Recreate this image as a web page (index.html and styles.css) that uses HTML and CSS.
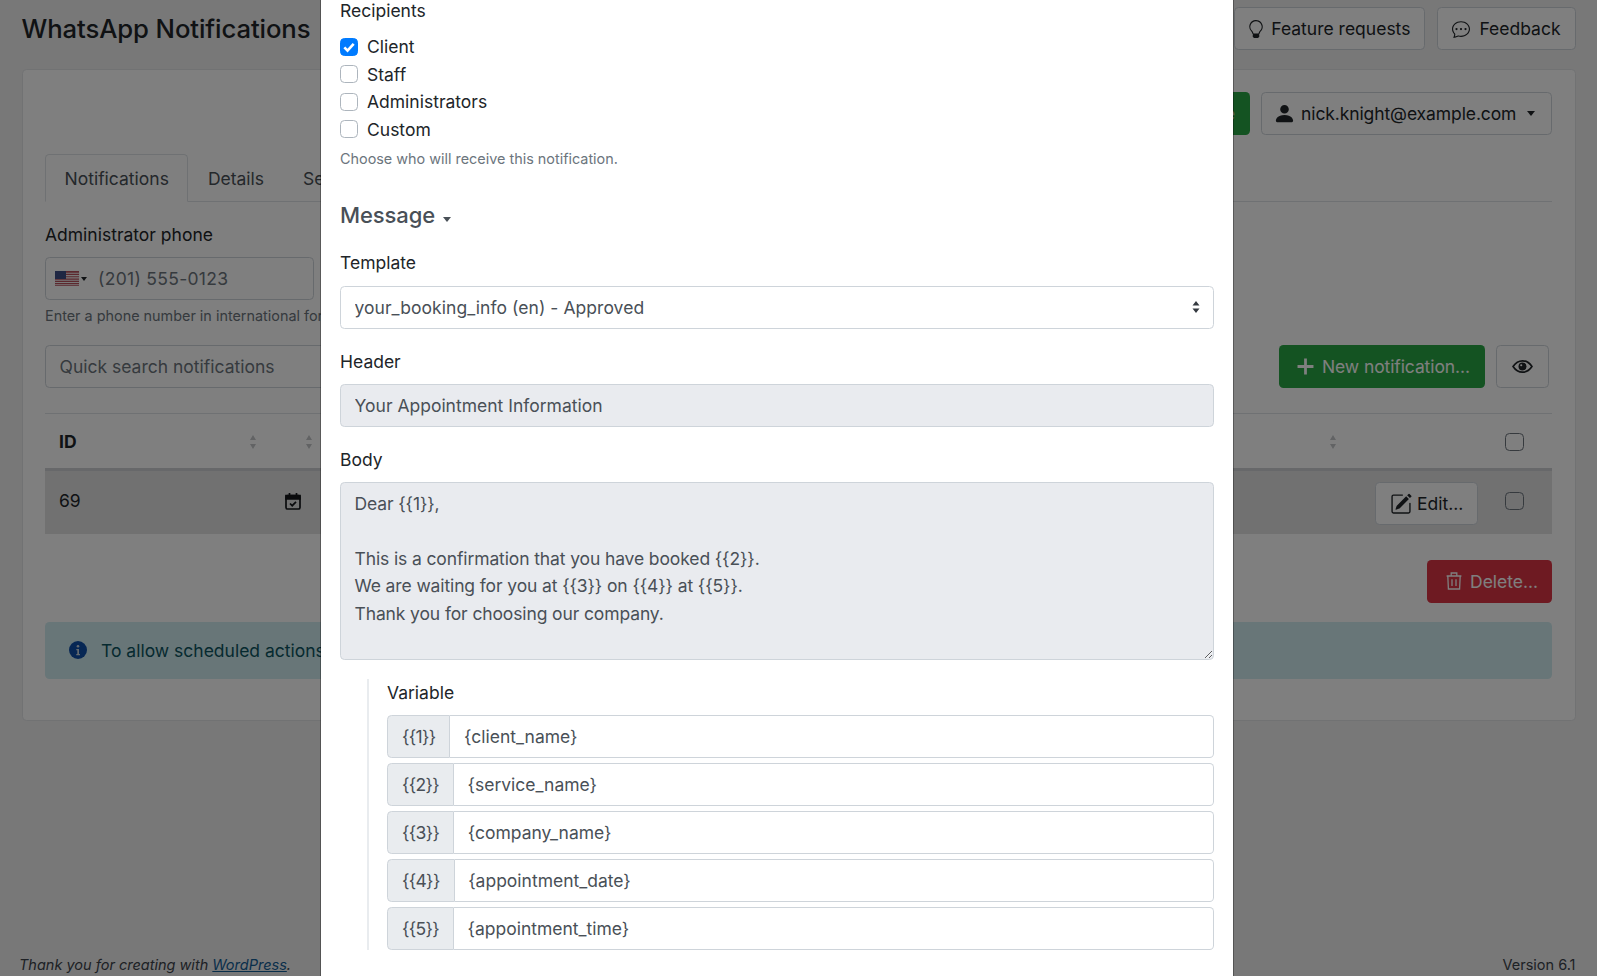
FILE: index.html
```html
<!DOCTYPE html>
<html lang="en">
<head>
<meta charset="utf-8">
<title>WhatsApp Notifications</title>
<link rel="stylesheet" href="styles.css">
</head>
<body>
<div class="page">
  <header class="top">
    <h1 class="title">WhatsApp Notifications</h1>
    <div class="top-actions">
      <a class="btn btn-light"><svg class="ico ico-bulb" viewBox="0 0 16 16"><path d="M2 6a6 6 0 1 1 10.174 4.31c-.203.196-.359.4-.453.619l-.762 1.769A.5.5 0 0 1 10.5 13a.5.5 0 0 1 0 1 .5.5 0 0 1 0 1l-.224.447a1 1 0 0 1-.894.553H6.618a1 1 0 0 1-.894-.553L5.5 15a.5.5 0 0 1 0-1 .5.5 0 0 1 0-1 .5.5 0 0 1-.46-.302l-.761-1.77a1.964 1.964 0 0 0-.453-.618A5.984 5.984 0 0 1 2 6zm6-5a5 5 0 0 0-3.479 8.592c.263.254.514.564.676.941L5.83 12h4.342l.632-1.467c.162-.377.413-.687.676-.941A5 5 0 0 0 8 1z"/></svg>Feature requests</a>
      <a class="btn btn-light"><svg class="ico" viewBox="0 0 16 16"><path d="M5 8a1 1 0 1 1-2 0 1 1 0 0 1 2 0zm4 0a1 1 0 1 1-2 0 1 1 0 0 1 2 0zm3 1a1 1 0 1 0 0-2 1 1 0 0 0 0 2z"/><path d="m2.165 15.803.02-.004c1.83-.363 2.948-.842 3.468-1.105A9.06 9.06 0 0 0 8 15c4.418 0 8-3.134 8-7s-3.582-7-8-7-8 3.134-8 7c0 1.76.743 3.37 1.97 4.6a10.437 10.437 0 0 1-.524 2.318l-.003.011a10.722 10.722 0 0 1-.244.637c-.079.186.074.394.273.362a21.673 21.673 0 0 0 .693-.125zm.8-3.108a1 1 0 0 0-.287-.801C1.618 10.83 1 9.468 1 8c0-3.192 3.004-6 7-6s7 2.808 7 6c0 3.193-3.004 6-7 6a8.06 8.06 0 0 1-2.088-.272 1 1 0 0 0-.711.074c-.387.196-1.24.57-2.634.893a10.97 10.97 0 0 0 .398-2z"/></svg>Feedback</a>
    </div>
  </header>

  <main class="card">
    <div class="account-row">
      <a class="btn btn-green btn-upgrade">Upgrade</a>
      <a class="btn btn-light btn-account"><svg class="ico ico-person" viewBox="0 0 16 16"><path d="M3 14s-1 0-1-1 1-4 6-4 6 3 6 4-1 1-1 1H3zm5-6a3 3 0 1 0 0-6 3 3 0 0 0 0 6z"/></svg><span class="account-name">nick.knight@example.com</span><span class="caret"></span></a>
    </div>

    <nav class="tabs">
      <a class="tab tab-active">Notifications</a>
      <a class="tab">Details</a>
      <a class="tab">Settings</a>
    </nav>

    <label class="label">Administrator phone</label>
    <div class="phone">
      <svg class="flag" viewBox="0 0 24 15"><rect width="24" height="15" fill="#b8505c"/><path d="M0 2.3h24M0 4.6h24M0 6.9h24M0 9.2h24M0 11.5h24M0 13.8h24" stroke="#f3f3f3" stroke-width="1.1"/><rect width="11" height="8" fill="#3f4f86"/></svg>
      <span class="caret caret-small"></span>
      <span class="phone-text">(201) 555-0123</span>
    </div>
    <p class="help help-phone">Enter a phone number in international format.</p>

    <div class="search-row">
      <input class="input input-search" placeholder="Quick search notifications">
      <a class="btn btn-green btn-new"><svg class="ico ico-plus" viewBox="0 0 16 16"><path d="M8 0.500v15M0.500 8h15"/></svg>New notification...</a>
      <a class="btn btn-light btn-eye"><svg class="ico ico-eye" viewBox="0 0 20 14"><path class="eye-line" d="M1 7c2.4-3.6 5.4-5.4 9-5.4s6.600 1.800 9 5.400c-2.400 3.600-5.400 5.400-9 5.400S3.400 10.600 1 7z"/><circle cx="10" cy="7" r="3.800"/><circle cx="8.800" cy="5.800" r="1" fill="#fff"/></svg></a>
    </div>

    <div class="table">
      <div class="tr tr-head">
        <div class="td td-id"><b>ID</b><svg class="sort" viewBox="0 0 8 16"><path d="M4 1l3 5H1zM4 15l3-5H1z"/></svg></div>
        <div class="td td-icon"><svg class="sort" viewBox="0 0 8 16"><path d="M4 1l3 5H1zM4 15l3-5H1z"/></svg></div>
        <div class="td td-name"><svg class="sort" viewBox="0 0 8 16"><path d="M4 1l3 5H1zM4 15l3-5H1z"/></svg></div>
        <div class="td td-action"></div>
        <div class="td td-check"><span class="check check-dark"></span></div>
      </div>
      <div class="tr tr-row">
        <div class="td td-id td-up">69</div>
        <div class="td td-icon td-cal td-up"><svg class="ico-cal" viewBox="0 0 16 18"><rect x="1" y="3.500" width="14" height="13.500" rx="1.500"/><path class="cal-band" d="M1 3.500h14v3.300H1z"/><path d="M4.500 1v3M11.500 1v3"/><path d="M5 11.500l2.200 2.200L11 9.800"/></svg></div>
        <div class="td td-name"></div>
        <div class="td td-action td-down"><a class="btn btn-light btn-edit"><svg class="ico" viewBox="0 0 16 16"><path d="M15.502 1.940a.5.5 0 0 1 0 .706L14.459 3.690l-2-2L13.502.646a.5.5 0 0 1 .707 0l1.293 1.293zm-1.750 2.456-2-2L4.939 9.210a.5.5 0 0 0-.121.196l-.805 2.414a.25.25 0 0 0 .316.316l2.414-.805a.5.5 0 0 0 .196-.12l6.813-6.814z"/><path d="M1 13.500A1.500 1.500 0 0 0 2.500 15h11a1.500 1.500 0 0 0 1.500-1.500v-6a.5.5 0 0 0-1 0v6a.5.5 0 0 1-.5.5h-11a.5.5 0 0 1-.5-.5v-11a.5.5 0 0 1 .5-.5H9a.5.5 0 0 0 0-1H2.500A1.500 1.500 0 0 0 1 2.500v11z"/></svg>Edit...</a></div>
        <div class="td td-check td-up"><span class="check check-dark"></span></div>
      </div>
    </div>

    <div class="delete-row">
      <a class="btn btn-red"><svg class="ico ico-trash" viewBox="0 0 16 18"><path d="M0.600 4h14.800M1.800 4l.6 13h11.200l.6-13M5.200 4V1h5.600v3M6 7.200v6.800M10 7.200v6.800"/></svg>Delete...</a>
    </div>

    <div class="alert">
      <svg class="ico-info" viewBox="0 0 18 18"><circle cx="9" cy="9" r="9" fill="#0f4fa8"/><circle cx="9" cy="5.300" r="1.300" fill="#c8d4df"/><path d="M7.300 8h2.700v5h1v1.200H7.300V13h1V9.200h-1z" fill="#c8d4df"/></svg>
      <span>To allow scheduled actions to run, please configure a cron job on your server.</span>
    </div>
  </main>

  <footer class="foot">
    <em>Thank you for creating with <a class="foot-link">WordPress</a>.</em>
    <span>Version 6.1</span>
  </footer>
</div>

<div class="backdrop"></div>

<section class="modal">
  <label class="label label-first">Recipients</label>
  <div class="checks">
    <div class="check-row"><span class="check check-on"><svg viewBox="0 0 12 12"><path d="M2.500 6.300l2.400 2.400 4.600-5"/></svg></span>Client</div>
    <div class="check-row"><span class="check"></span>Staff</div>
    <div class="check-row"><span class="check"></span>Administrators</div>
    <div class="check-row"><span class="check"></span>Custom</div>
  </div>
  <p class="help help-rec">Choose who will receive this notification.</p>

  <h2 class="section">Message<span class="caret caret-section"></span></h2>

  <div class="group">
    <label class="label">Template</label>
    <div class="select-wrap">
      <select class="input select"><option>your_booking_info (en) - Approved</option></select>
      <svg class="select-arrows" viewBox="0 0 8 12"><path d="M4 0l3.500 4.500H.5zM4 12L.5 7.500h7z"/></svg>
    </div>
  </div>
  <div class="group">
    <label class="label">Header</label>
    <input class="input input-off" value="Your Appointment Information" readonly>
  </div>
  <div class="group">
    <label class="label label-body">Body</label>
    <textarea class="input input-off textarea" readonly>Dear {{1}},

This is a confirmation that you have booked {{2}}.
We are waiting for you at {{3}} on {{4}} at {{5}}.
Thank you for choosing our company.</textarea>
  </div>

  <div class="vars">
    <label class="label">Variable</label>
    <div class="var-group"><span class="addon">{{1}}</span><input class="input var-input" value="{client_name}"></div>
    <div class="var-group"><span class="addon">{{2}}</span><input class="input var-input" value="{service_name}"></div>
    <div class="var-group"><span class="addon">{{3}}</span><input class="input var-input" value="{company_name}"></div>
    <div class="var-group"><span class="addon">{{4}}</span><input class="input var-input" value="{appointment_date}"></div>
    <div class="var-group"><span class="addon">{{5}}</span><input class="input var-input" value="{appointment_time}"></div>
  </div>
</section>
</body>
</html>
```

FILE: styles.css
```css
* { box-sizing: border-box; }
html, body { margin: 0; height: 976px; overflow: hidden; }
body {
  background: #f0f0f1;
  color: #212529;
  font-family: Inter, "Liberation Sans", sans-serif;
  font-size: 17.5px;
  line-height: 27px;
}
.page {
  height: 976px;
  padding: 7px 21.500px 0 22px;
  display: flex;
  flex-direction: column;
}
.top { display: flex; justify-content: space-between; align-items: center; margin-bottom: 19px; }
.title { margin: 0 0 0 -.500px; font-size: 25.700px; line-height: 43px; font-weight: 500; letter-spacing: -.1px; position: relative; top: 0; }
.top-actions { display: flex; gap: 12px; }

.btn {
  display: inline-flex;
  align-items: center;
  height: 43px;
  padding: 0 14px;
  border: 1px solid transparent;
  border-radius: 4.500px;
  white-space: nowrap;
}
.btn-light { background: #fff; border-color: #ced4da; color: #212529; }
.btn-green { background: #28a745; color: #fff; }
.btn-red { background: #dc3545; color: #fff; }
.ico { width: 18px; height: 18px; margin-right: 9px; fill: currentColor; flex: none; }
.ico-bulb { margin-left: -2px; margin-right: 6px; }

.card {
  background: #fff;
  border: 1px solid #e2e4e7;
  border-radius: 4.500px;
  padding: 22px 22.500px 41px 22px;
}
.account-row { display: flex; justify-content: flex-end; gap: 11px; }
.btn-account { background: #fff; width: 291px; padding-left: 14px; }
.ico-person { width: 23px; height: 23px; margin: 0 5px 0 -3px; }
.account-name { letter-spacing: -.1px; }
.caret {
  display: inline-block;
  width: 0;
  height: 0;
  border-left: 4.500px solid transparent;
  border-right: 4.500px solid transparent;
  border-top: 5px solid currentColor;
  margin-left: 11px;
}

.tabs { display: flex; margin-top: 19px; border-bottom: 1px solid #dee2e6; height: 48px; }
.tab {
  padding: 10px 18.500px 0;
  border: 1px solid transparent;
  border-radius: 4.500px 4.500px 0 0;
  height: 48px;
  color: #495057;
}
.tab-active { background: #fff; border-color: #dee2e6 #dee2e6 #fff; }

.label { display: block; }
.tabs + .label { margin-top: 19px; }
.phone {
  margin-top: 9px;
  width: 269px;
  height: 43px;
  border: 1px solid #ced4da;
  border-radius: 4.500px;
  display: flex;
  align-items: center;
  padding-left: 9px;
  background: #fff;
  color: #6c757d;
}
.flag { width: 24px; height: 15px; flex: none; }
.caret-small { border-width: 4px 3.500px 0; margin-left: 2px; color: #212529; }
.phone-text { margin-left: 11px; letter-spacing: .3px; }
.help { margin: 0; font-size: 14.400px; line-height: 21.600px; color: #6c757d; }
.help-phone { margin-top: 5px; white-space: nowrap; }

.search-row { display: flex; margin-top: 18px; align-items: center; }
.input {
  height: 43px;
  border: 1px solid #ced4da;
  border-radius: 4.500px;
  background: #fff;
  color: #495057;
  font: inherit;
  padding: 0 13.500px;
  width: 100%;
  display: block;
  outline: none;
}
.input::placeholder { color: #6c757d; opacity: 1; }
.input-search { width: 500px; }
.btn-new { margin-left: auto; width: 206px; padding-left: 17px; letter-spacing: -.1px; }
.ico-plus { fill: none; stroke: currentColor; stroke-width: 2.600px; margin-right: 8px; width: 17px; height: 17px; }
.btn-eye { margin-left: 11px; margin-right: 3px; width: 53px; justify-content: center; padding: 0; }
.ico-eye { width: 21px; height: 15px; margin: 0; }
.eye-line { fill: none; stroke: currentColor; stroke-width: 1.600px; }

.table { margin-top: 25px; border-top: 1px solid #dee2e6; }
.tr { display: grid; grid-template-columns: 217px 56px 1fr 148px 62px; align-items: center; }
.tr-head { height: 57px; padding-top: 2px; border-bottom: 3px solid #ced1d4; }
.tr-row { height: 63px; background: #e2e2e3; }
.td { padding-left: 14px; }
.td-id { display: flex; justify-content: space-between; align-items: center; padding-right: 5px; }
.td-icon { display: flex; justify-content: flex-end; padding-right: 5px; }
.td-cal { padding-right: 17px; }
.td-name { display: flex; justify-content: flex-end; padding-right: 5px; }
.td-action { display: flex; justify-content: flex-end; padding-right: 12px; }
.td-check { padding-left: 15px; display: flex; }
.td-up { position: relative; top: -1.500px; }
.td-down { position: relative; top: 1.500px; }
.sort { width: 8px; height: 16px; fill: #c4c6c9; }
.ico-cal { width: 16px; height: 18px; fill: none; stroke: #14171a; stroke-width: 1.700px; }
.cal-band { fill: #14171a; }
.btn-edit { width: 103px; padding-left: 14px; }
.btn-edit .ico { margin-right: 5px; width: 22px; height: 22px; }

.delete-row { display: flex; justify-content: flex-end; margin-top: 26px; }
.btn-red { width: 125px; padding-left: 18px; }
.ico-trash { fill: none; stroke: currentColor; stroke-width: 1.300px; margin-right: 8px; width: 16px; height: 18px; }

.alert {
  margin-top: 19px;
  height: 57px;
  background: #d1ecf1;
  border-radius: 4.500px;
  display: flex;
  align-items: center;
  padding-left: 24px;
  color: #0c5460;
  white-space: nowrap;
}
.ico-info { width: 18px; height: 18px; margin-right: 14px; flex: none; }

.foot {
  margin-top: auto;
  margin-left: -3px;
  height: 21px;
  display: flex;
  justify-content: space-between;
  font-size: 14.500px;
  line-height: 20px;
  color: #3c434a;
}
.foot-link { color: #135e96; text-decoration: underline; }

.backdrop { position: fixed; inset: 0; background: rgba(0, 0, 0, .5); }

.modal {
  position: fixed;
  top: 0;
  left: 320px;
  width: 914px;
  height: 976px;
  background: #fff;
  background-clip: padding-box;
  border-left: 1px solid rgba(0, 0, 0, .3);
  border-right: 1px solid rgba(0, 0, 0, .3);
  padding: 0 19px;
  overflow: hidden;
}
.label-first { margin-top: -3.500px; }
.checks { margin-top: 9.500px; }
.check-row { display: flex; align-items: center; height: 27.500px; }
.check {
  flex: none;
  width: 18px;
  height: 18px;
  border: 1px solid #adb5bd;
  border-radius: 4.500px;
  background: #fff;
  margin-right: 9px;
  display: block;
}
.check-dark { border-color: #6c757d; background: transparent; margin: 0; width: 19px; height: 18px; }
.check-on { background: #007bff; border-color: #007bff; }
.check-on svg { display: block; width: 16px; height: 16px; fill: none; stroke: #fff; stroke-width: 2px; }
.help-rec { margin-top: 4.500px; }
.section { margin: 32px 0 0; font-size: 22px; line-height: 29px; font-weight: 500; letter-spacing: -.1px; color: #495057; }
.caret-section { color: #495057; margin-left: 8px; vertical-align: 1px; }
.group { margin-top: 19px; }
.group .label { margin-bottom: 9.500px; }
.group .label-body { margin-bottom: 8.500px; }
.select-wrap { position: relative; }
.select { appearance: none; -webkit-appearance: none; letter-spacing: .05px; }
.select-arrows { position: absolute; right: 14px; top: 15px; width: 8px; height: 12px; fill: #343a40; }
.input-off { background: #e9ebef; }
.textarea { height: 178px; padding-top: 7px; padding-bottom: 7px; line-height: 27.500px; letter-spacing: -.12px; resize: vertical; overflow: hidden; }
.vars {
  margin: 19px 0 0 27px;
  border-left: 2px solid #e9ecef;
  padding: 0 0 0 18px;
}
.vars .label { margin-bottom: 9.500px; }
.var-group { display: flex; margin-bottom: 5px; }
.addon {
  flex: none;
  height: 43px;
  padding: 0 14px;
  display: flex;
  align-items: center;
  background: #e9ecef;
  border: 1px solid #ced4da;
  border-radius: 4.500px 0 0 4.500px;
  color: #495057;
  letter-spacing: -.7px;
}
.var-input { border-left: 0; border-radius: 0 4.500px 4.500px 0; flex: 1; min-width: 0; }
```
